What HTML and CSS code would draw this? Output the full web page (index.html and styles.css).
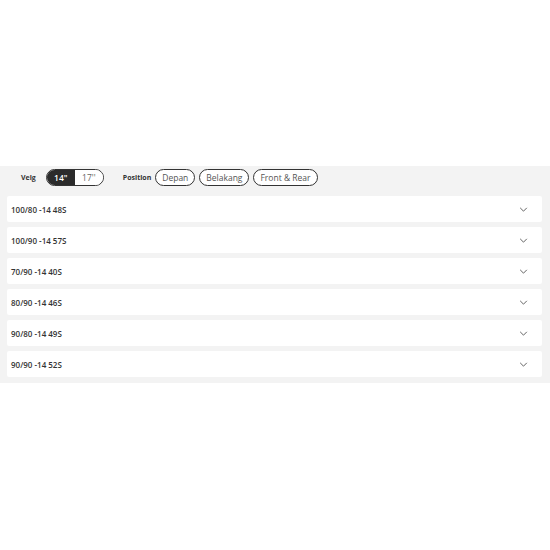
FILE: index.html
```html
<!DOCTYPE html>
<html lang="en">
<head>
    <meta charset="UTF-8">
    <title>Ukuran Ban</title>
    <link rel="stylesheet" href="styles.css">
</head>
<body>

<section class="tire-panel">
    <div class="filters">
        <span class="filter-label">Velg</span>
        <div class="toggle">
            <button class="toggle-btn active">14"</button>
            <button class="toggle-btn">17''</button>
        </div>
        <span class="filter-label position-label">Position</span>
        <button class="pill">Depan</button>
        <button class="pill">Belakang</button>
        <button class="pill">Front &amp; Rear</button>
    </div>

    <div class="size-list">
        <div class="size-item"><span>100/80 -14 48S</span><svg class="chevron" viewBox="0 0 10 6"><path d="M1 1l4 4 4-4"/></svg></div>
        <div class="size-item"><span>100/90 -14 57S</span><svg class="chevron" viewBox="0 0 10 6"><path d="M1 1l4 4 4-4"/></svg></div>
        <div class="size-item"><span>70/90 -14 40S</span><svg class="chevron" viewBox="0 0 10 6"><path d="M1 1l4 4 4-4"/></svg></div>
        <div class="size-item"><span>80/90 -14 46S</span><svg class="chevron" viewBox="0 0 10 6"><path d="M1 1l4 4 4-4"/></svg></div>
        <div class="size-item"><span>90/80 -14 49S</span><svg class="chevron" viewBox="0 0 10 6"><path d="M1 1l4 4 4-4"/></svg></div>
        <div class="size-item"><span>90/90 -14 52S</span><svg class="chevron" viewBox="0 0 10 6"><path d="M1 1l4 4 4-4"/></svg></div>
    </div>
</section>

</body>
</html>
```

FILE: styles.css
```css
* {
    margin: 0;
    padding: 0;
    box-sizing: border-box;
}

body {
    font-family: 'Open Sans', sans-serif;
    background-color: #fff;
    color: #333;
}

.tire-panel {
    margin-top: 166px;
    background-color: #f3f3f3;
    padding: 3px 8px 6px 7px;
}

.filters {
    display: flex;
    align-items: center;
    height: 17px;
    padding-left: 14px;
    margin-bottom: 10px;
}

.filter-label {
    font-size: 7px;
    font-weight: 700;
    color: #333;
    margin-right: 10px;
}

.position-label {
    margin-left: 19px;
    margin-right: 4px;
}

.toggle {
    display: flex;
    height: 17px;
    width: 58px;
    border: 1px solid #333;
    border-radius: 9px;
    overflow: hidden;
}

.toggle-btn {
    flex: 1;
    border: none;
    background: #fff;
    font-family: 'Open Sans', sans-serif;
    font-size: 8.5px;
    color: #666;
}

.toggle-btn.active {
    background: #2b2b2b;
    color: #fff;
    font-weight: 600;
}

.pill {
    height: 17px;
    padding: 0 6px;
    margin-right: 4px;
    border: 1px solid #333;
    border-radius: 9px;
    background: #fff;
    font-family: 'Open Sans', sans-serif;
    font-size: 8.5px;
    color: #555;
}

.size-list {
    display: flex;
    flex-direction: column;
    gap: 5px;
}

.size-item {
    display: flex;
    align-items: center;
    justify-content: space-between;
    height: 26px;
    padding: 0 14px 0 4px;
    background: #fff;
    border-radius: 2px;
    font-size: 8px;
    font-weight: 600;
    color: #333;
}

.chevron {
    width: 9px;
    height: 5px;
    fill: none;
    stroke: #555;
    stroke-width: 1.1;
}
```
